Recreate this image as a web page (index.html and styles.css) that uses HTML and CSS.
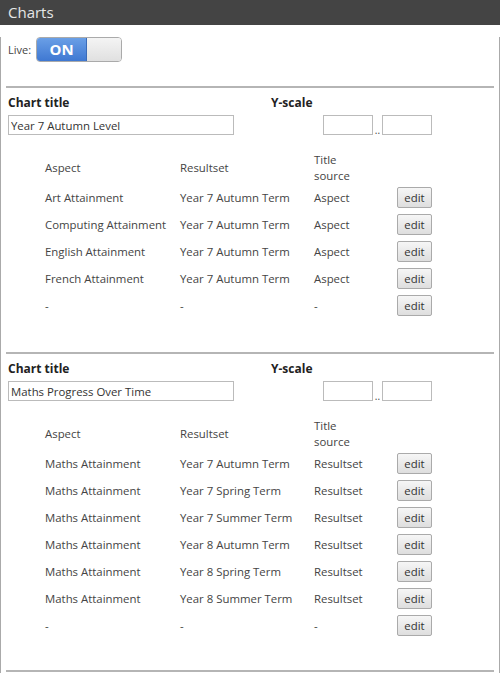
FILE: index.html
```html
<!DOCTYPE html>
<html lang="en">
<head>
  <meta charset="UTF-8">
  <title>Charts</title>
  <link rel="stylesheet" href="styles.css">
</head>
<body>

  <div class="header">Charts</div>

  <div class="frame">
    <div class="live">
      <span class="live-label">Live:</span>
      <div class="toggle">
        <span class="toggle-on">ON</span>
        <span class="toggle-off"></span>
      </div>
    </div>

    <div class="charts">
      <!-- chart 1 -->
      <div class="chart">
        <div class="chart-top">
          <div class="title-col">
            <label>Chart title</label>
            <input class="title-input" value="Year 7 Autumn Level">
          </div>
          <div class="scale-col">
            <label>Y-scale</label>
            <div class="scale-inputs">
              <input class="scale-input"><span class="dots">..</span><input class="scale-input">
            </div>
          </div>
        </div>
        <table class="series">
          <tr class="head">
            <td class="c-aspect">Aspect</td>
            <td class="c-result">Resultset</td>
            <td class="c-source">Title<br>source</td>
            <td></td>
          </tr>
          <tr><td>Art Attainment</td><td>Year 7 Autumn Term</td><td>Aspect</td><td><button>edit</button></td></tr>
          <tr><td>Computing Attainment</td><td>Year 7 Autumn Term</td><td>Aspect</td><td><button>edit</button></td></tr>
          <tr><td>English Attainment</td><td>Year 7 Autumn Term</td><td>Aspect</td><td><button>edit</button></td></tr>
          <tr><td>French Attainment</td><td>Year 7 Autumn Term</td><td>Aspect</td><td><button>edit</button></td></tr>
          <tr><td>-</td><td>-</td><td>-</td><td><button>edit</button></td></tr>
        </table>
      </div>

      <!-- chart 2 -->
      <div class="chart">
        <div class="chart-top">
          <div class="title-col">
            <label>Chart title</label>
            <input class="title-input" value="Maths Progress Over Time">
          </div>
          <div class="scale-col">
            <label>Y-scale</label>
            <div class="scale-inputs">
              <input class="scale-input"><span class="dots">..</span><input class="scale-input">
            </div>
          </div>
        </div>
        <table class="series">
          <tr class="head">
            <td class="c-aspect">Aspect</td>
            <td class="c-result">Resultset</td>
            <td class="c-source">Title<br>source</td>
            <td></td>
          </tr>
          <tr><td>Maths Attainment</td><td>Year 7 Autumn Term</td><td>Resultset</td><td><button>edit</button></td></tr>
          <tr><td>Maths Attainment</td><td>Year 7 Spring Term</td><td>Resultset</td><td><button>edit</button></td></tr>
          <tr><td>Maths Attainment</td><td>Year 7 Summer Term</td><td>Resultset</td><td><button>edit</button></td></tr>
          <tr><td>Maths Attainment</td><td>Year 8 Autumn Term</td><td>Resultset</td><td><button>edit</button></td></tr>
          <tr><td>Maths Attainment</td><td>Year 8 Spring Term</td><td>Resultset</td><td><button>edit</button></td></tr>
          <tr><td>Maths Attainment</td><td>Year 8 Summer Term</td><td>Resultset</td><td><button>edit</button></td></tr>
          <tr><td>-</td><td>-</td><td>-</td><td><button>edit</button></td></tr>
        </table>
      </div>
    </div>
  </div>

</body>
</html>
```

FILE: styles.css
```css
* { box-sizing: border-box; }
body {
  margin: 0;
  background: #fff;
  color: #444;
  font-family: 'Open Sans', 'Noto Sans', sans-serif;
  font-size: 11.4px;
}
.header {
  height: 25px;
  line-height: 25px;
  background: #444;
  color: #e6e6e6;
  font-size: 15px;
  padding-left: 8px;
}
.frame {
  border-left: 1px solid #aaa;
  border-right: 1px solid #aaa;
  min-height: 648px;
  padding: 0 5px;
}
.live {
  display: flex;
  align-items: center;
  height: 25px;
  margin-top: 12px;
  padding-left: 2px;
}
.live-label {
  font-size: 11px;
  margin-right: 5px;
}
.toggle {
  display: flex;
  width: 86px;
  height: 25px;
  border: 1px solid #aaa;
  border-radius: 4px;
  overflow: hidden;
}
.toggle-on {
  width: 50px;
  background: linear-gradient(#6a9fe6, #3f78d2);
  color: #fff;
  font-weight: bold;
  font-size: 15px;
  text-align: center;
  line-height: 23px;
  border-right: 1px solid #3a6bb8;
}
.toggle-off {
  flex: 1;
  background: linear-gradient(#f4f4f4, #e0e0e0);
}
.charts {
  margin-top: 24px;
  border-bottom: 2px solid #b5b5b5;
}
.chart {
  border-top: 2px solid #b5b5b5;
  padding: 6px 0 33px 2px;
}
.chart:last-child { padding-bottom: 31px; }
.chart-top {
  display: flex;
}
.title-col {
  width: 263px;
}
.scale-col {
  display: flex;
  flex-direction: column;
}
label {
  display: block;
  font-weight: bold;
  font-size: 12px;
  color: #222;
  height: 18px;
  line-height: 18px;
}
input {
  font-family: inherit;
  font-size: 11.4px;
  color: #333;
  height: 20px;
  border: 1px solid #bbb;
  padding: 0 2px;
  margin: 3px 0 0;
}
.title-input {
  width: 226px;
}
.scale-inputs {
  display: flex;
  align-items: flex-end;
  margin-left: 52px;
}
.scale-input {
  width: 50px;
}
.dots {
  width: 9px;
  text-align: center;
  line-height: 10px;
  font-size: 10px;
}
.series {
  border-collapse: collapse;
  margin-top: 16px;
  margin-left: 37px;
}
.series td {
  padding: 0;
  height: 27px;
  vertical-align: middle;
  white-space: nowrap;
}
.series .head td { height: 33px; line-height: 16px; }
.c-aspect { width: 135px; }
.c-result { width: 134px; }
.c-source { width: 83px; }
button {
  font-family: inherit;
  font-size: 11.4px;
  color: #333;
  width: 35px;
  height: 21px;
  padding: 0;
  border: 1px solid #aaa;
  border-radius: 2px;
  background: linear-gradient(#f6f6f6, #dedede);
}
```
